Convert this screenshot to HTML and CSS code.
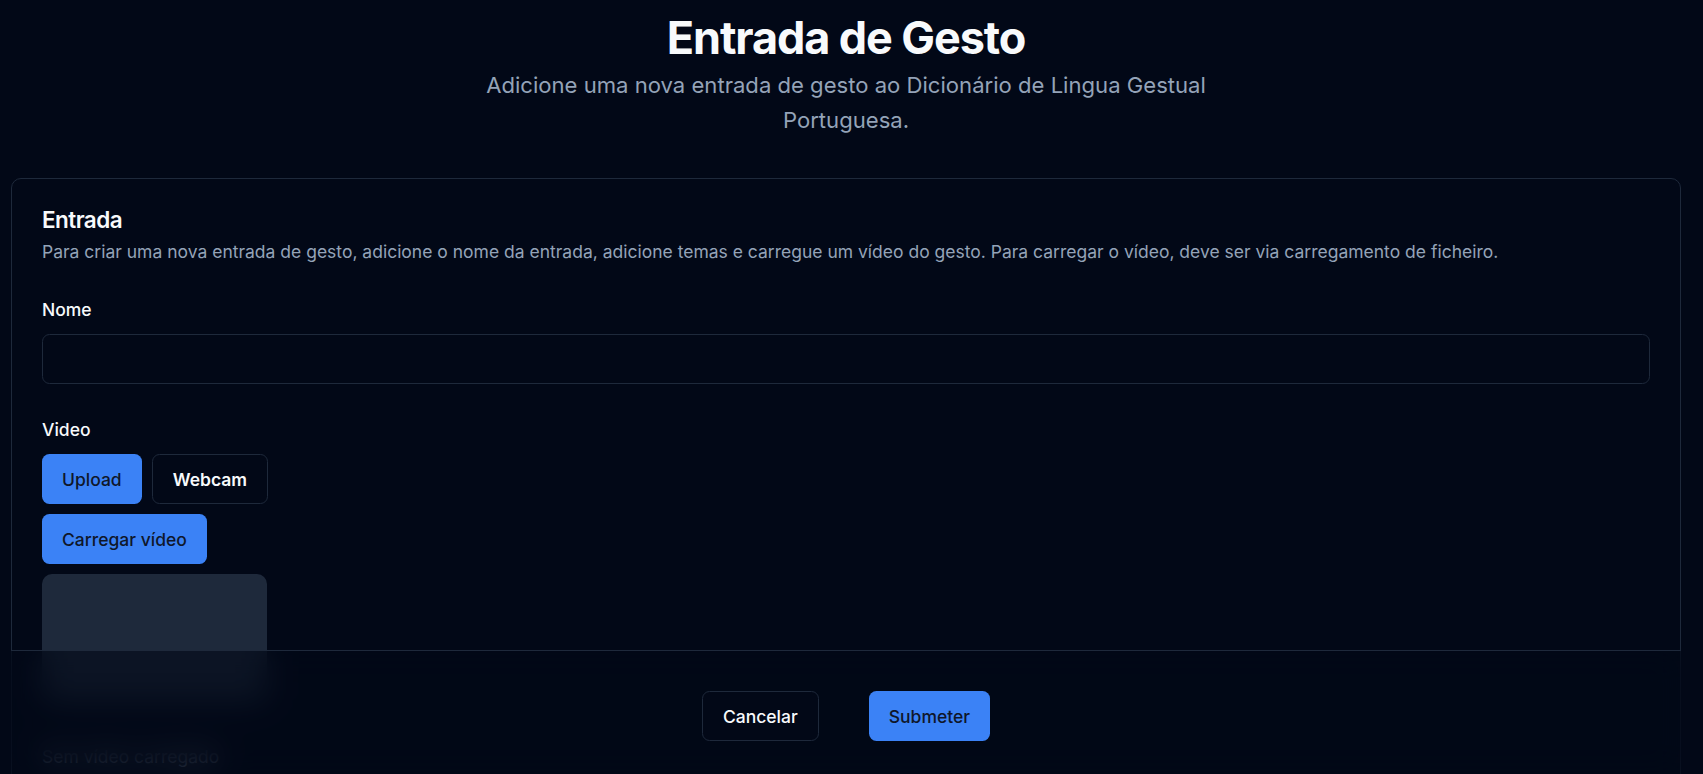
FILE: index.html
```html
<!DOCTYPE html>
<html lang="pt">
<head>
<meta charset="utf-8">
<title>Entrada de Gesto</title>
<link rel="stylesheet" href="styles.css">
</head>
<body>
<div class="page">
  <header class="hero">
    <h1 class="hero-title">Entrada de Gesto</h1>
    <p class="hero-sub">Adicione uma nova entrada de gesto ao Dicionário de Lingua Gestual Portuguesa.</p>
  </header>

  <section class="card">
    <div class="card-head">
      <h2 class="card-title">Entrada</h2>
      <p class="card-desc">Para criar uma nova entrada de gesto, adicione o nome da entrada, adicione temas e carregue um vídeo do gesto. Para carregar o vídeo, deve ser via carregamento de ficheiro.</p>
    </div>
    <div class="card-body">
      <div class="field">
        <label class="label" for="nome">Nome</label>
        <input class="input" id="nome" type="text">
      </div>
      <div class="field field-video">
        <span class="label">Video</span>
        <div class="tabs">
          <button class="btn btn-primary">Upload</button>
          <button class="btn btn-outline btn-strong">Webcam</button>
        </div>
        <div class="upload-row">
          <button class="btn btn-primary">Carregar vídeo</button>
        </div>
        <div class="preview"></div>
        <p class="hint">Sem vídeo carregado</p>
      </div>
      <div class="field field-temas">
        <span class="label">Temas</span>
        <input class="input" type="text">
      </div>
    </div>
  </section>

  <footer class="actions">
    <button class="btn btn-outline">Cancelar</button>
    <button class="btn btn-primary">Submeter</button>
  </footer>
</div>
</body>
</html>
```

FILE: styles.css
```css
* {
  box-sizing: border-box;
}

html,
body {
  margin: 0;
  padding: 0;
  background: #020817;
  color: #f8fafc;
  font-family: Inter, "Noto Sans", "Liberation Sans", sans-serif;
}

.page {
  position: relative;
  height: 774px;
  overflow: hidden;
  margin: 0 22px 0 11px;
  padding-top: 12.5px;
}

.hero {
  display: flex;
  flex-direction: column;
  align-items: center;
  text-align: center;
}

.hero-title {
  margin: 0;
  font-size: 45px;
  line-height: 50px;
  font-weight: 700;
  letter-spacing: -1.1px;
  color: #f8fafc;
}

.hero-sub {
  margin: 5.5px 0 0;
  max-width: 760px;
  font-size: 22.1px;
  line-height: 35px;
  color: #94a3b8;
}

.card {
  margin-top: 39.5px;
  border: 1px solid #1e293b;
  border-radius: 10px;
  padding: 30px 30px 120px;
}

.card-title {
  margin: 0;
  font-size: 22.5px;
  line-height: 22.5px;
  font-weight: 600;
  letter-spacing: -0.56px;
  color: #f8fafc;
}

.card-desc {
  margin: 7.5px 0 0;
  font-size: 17.5px;
  line-height: 25px;
  color: #94a3b8;
}

.card-body {
  padding-top: 37.5px;
  display: flex;
  flex-direction: column;
}

.field {
  display: flex;
  flex-direction: column;
  align-items: flex-start;
}

.field-video {
  margin-top: 37px;
}

.field-temas {
  margin-top: 40px;
}

.label {
  font-size: 17.5px;
  line-height: 17.5px;
  font-weight: 500;
  color: #f8fafc;
}

.input {
  margin-top: 15.5px;
  width: 100%;
  height: 50px;
  border: 1px solid #1e293b;
  border-radius: 7.5px;
  background: #020817;
  color: #f8fafc;
  font: inherit;
  font-size: 17.5px;
  padding: 0 15px;
  outline: none;
}

.tabs {
  margin-top: 15.5px;
  display: flex;
  gap: 10px;
}

.upload-row {
  margin-top: 10px;
  display: flex;
}

.btn {
  height: 50px;
  padding: 0 20px;
  border-radius: 7.5px;
  font-family: inherit;
  font-size: 17.5px;
  font-weight: 500;
  line-height: 25px;
  cursor: pointer;
  display: inline-flex;
  align-items: center;
  justify-content: center;
  white-space: nowrap;
}

.btn-primary {
  background: #3b82f6;
  color: #0f172a;
  border: 0;
}

.btn-outline {
  background: #020817;
  color: #f8fafc;
  border: 1px solid #1e293b;
}

.btn-strong {
  font-weight: 600;
}

.preview {
  margin-top: 10px;
  width: 225px;
  height: 127px;
  border-radius: 10px;
  background: #1e293b;
}

.hint {
  margin: 43px 0 0;
  font-size: 17.5px;
  line-height: 25px;
  color: #94a3b8;
}

.actions {
  position: absolute;
  left: 0;
  right: 0;
  bottom: 0;
  display: flex;
  justify-content: center;
  gap: 50px;
  padding: 40px 0 33px;
  border-top: 1px solid #1e293b;
  background: rgba(2, 8, 23, 0.62);
  -webkit-backdrop-filter: blur(16px);
  backdrop-filter: blur(16px);
}
```
